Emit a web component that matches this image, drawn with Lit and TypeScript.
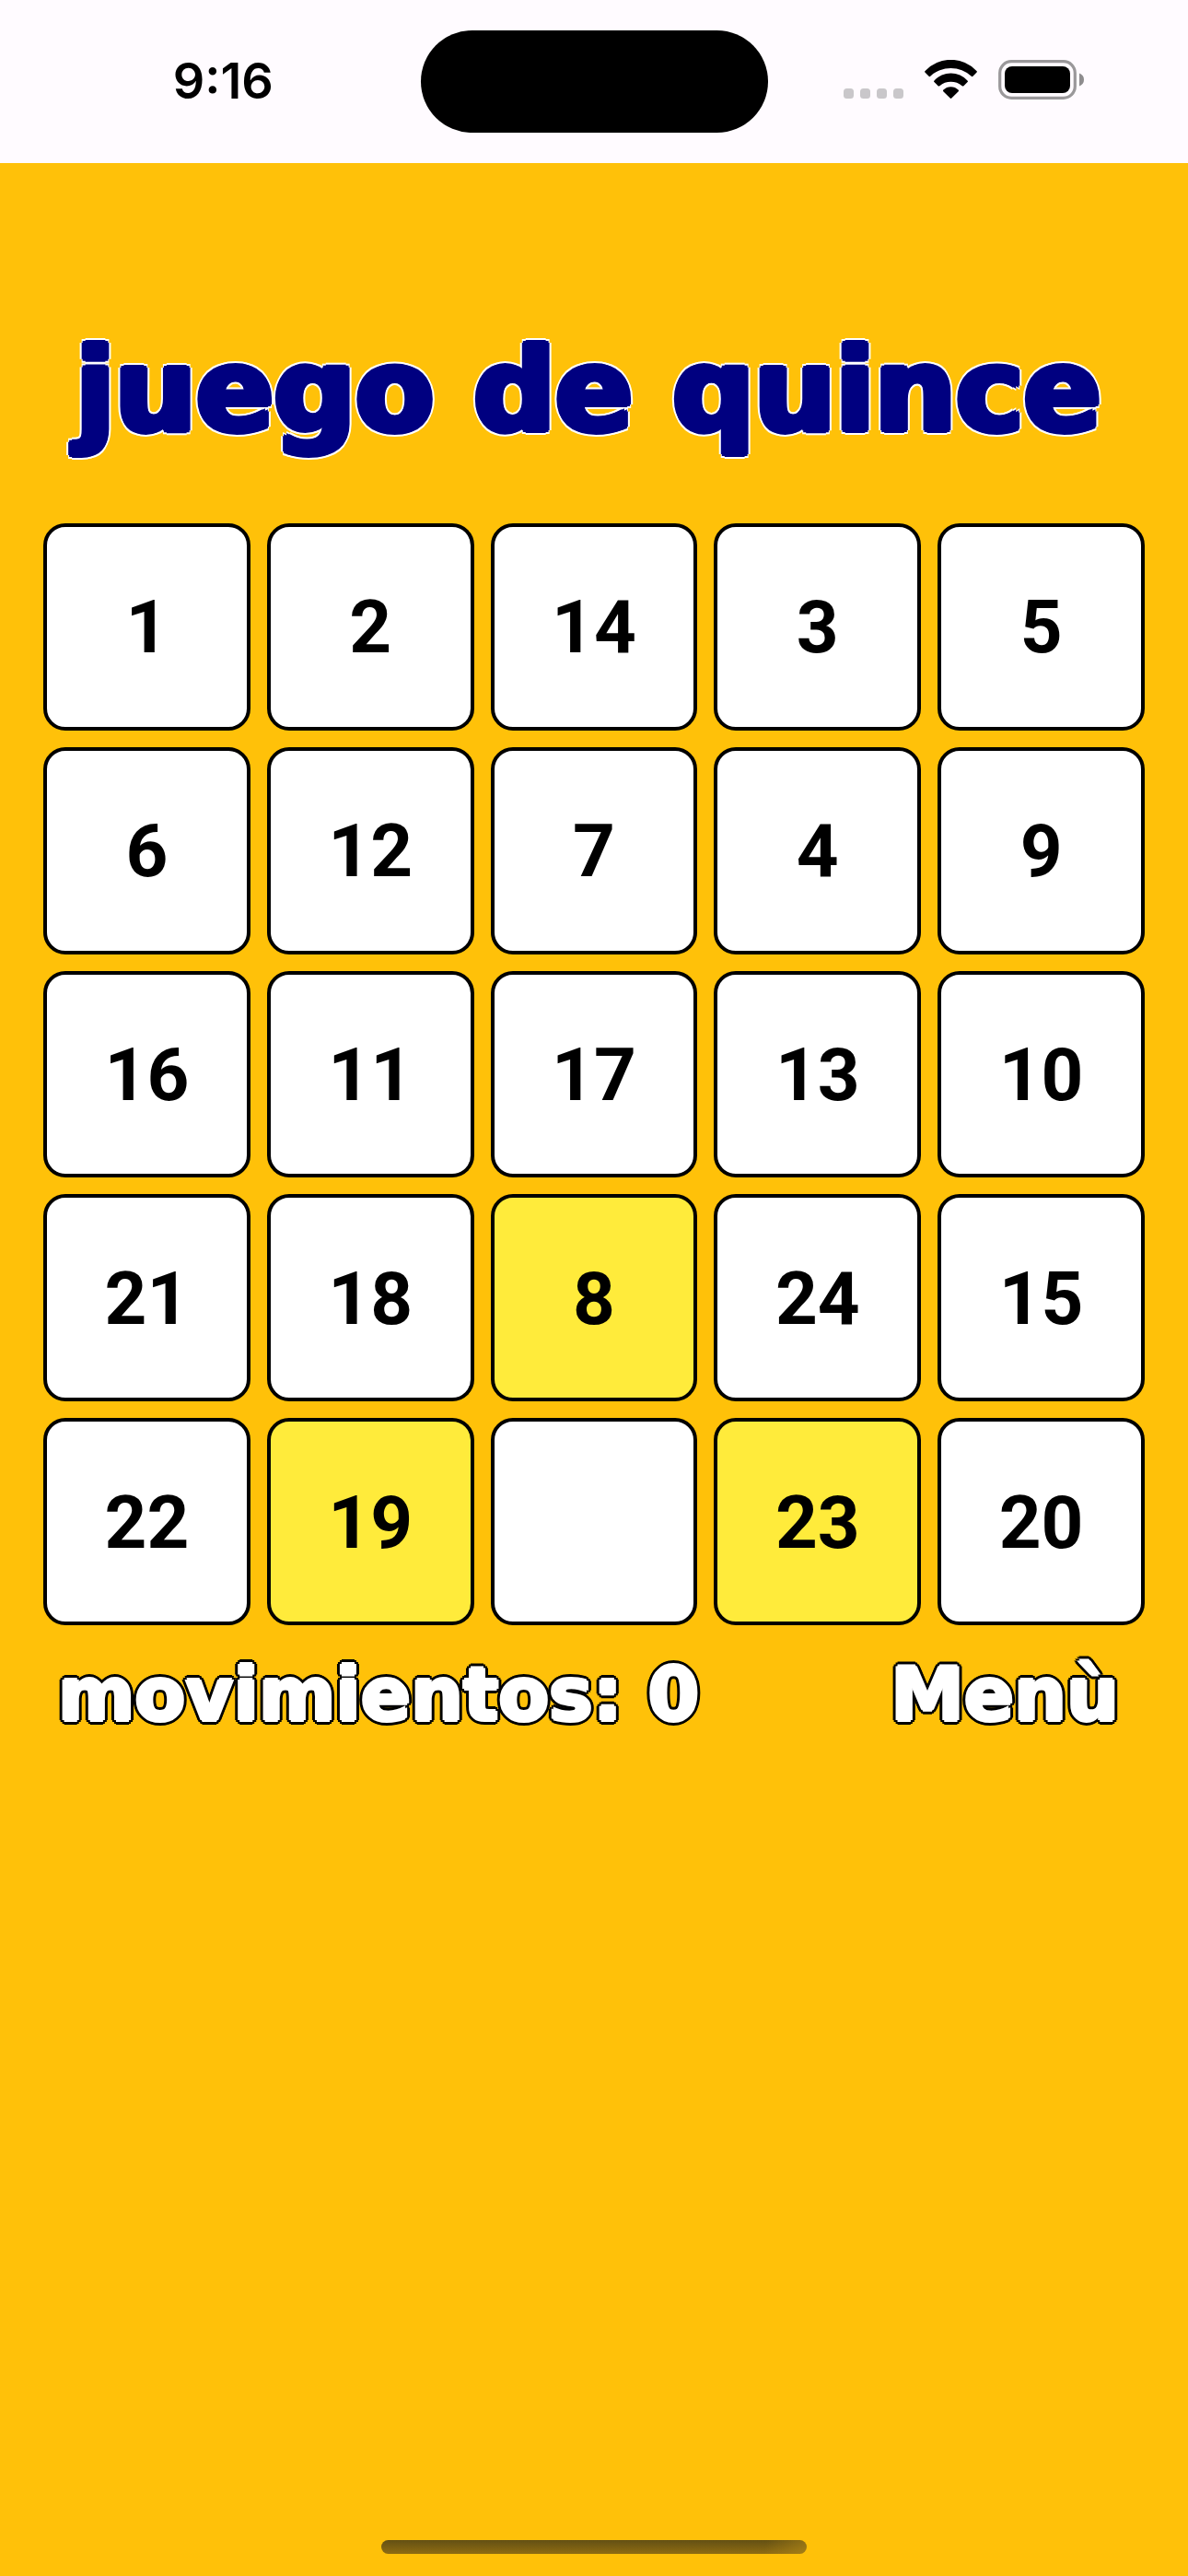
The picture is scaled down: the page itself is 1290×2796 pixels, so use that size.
import { LitElement, html, css, svg } from "lit";
import { customElement, state } from "lit/decorators.js";
import { classMap } from "lit/directives/class-map.js";

const SIZE = 5;

const START: number[] = [
  1, 2, 14, 3, 5,
  6, 12, 7, 4, 9,
  16, 11, 17, 13, 10,
  21, 18, 8, 24, 15,
  22, 19, 0, 23, 20,
];

@customElement("status-bar")
class StatusBar extends LitElement {
  static styles = css`
    :host {
      display: grid;
      grid-template-columns: 1fr 377px 1fr;
      align-items: center;
      height: 177px;
      background: #fffbff;
      color: #000;
    }
    .time {
      justify-self: center;
      padding-right: 2px;
      padding-left: 30px;
      padding-bottom: 2px;
      font: 600 54px/64px Inter, "Liberation Sans", sans-serif;
    }
    .island {
      height: 111px;
      border-radius: 56px;
      background: #000;
    }
    .icons {
      justify-self: center;
      display: flex;
      padding-right: 30px;
      padding-bottom: 4px;
    }
  `;

  render() {
    return html`
      <time class="time">9:16</time>
      <div class="island"></div>
      <div class="icons">
        <svg width="261" height="43" viewBox="0 0 261 43" aria-hidden="true">
          ${[0, 18, 36, 54].map(
            (x) => svg`<rect x=${x} y="31" width="11" height="11" rx="3.5" fill="#c9c7ca" />`,
          )}
          <g transform="translate(88 0)">
            <path d="M0.6 11.9A38.3 38.3 0 0 1 56.4 11.9Q57.4 12.7 56.6 13.5L52.4 17.8Q51.7 18.5 50.8 17.7A32.8 32.8 0 0 0 6.2 17.7Q5.3 18.5 4.6 17.8L0.4 13.5Q-0.4 12.7 0.6 11.9Z" />
            <path d="M10.5 22.4A24.2 24.2 0 0 1 46.5 22.4Q47.4 23.2 46.6 24L42.4 28.2Q41.6 29 40.7 28.2A18.8 18.8 0 0 0 16.3 28.2Q15.4 29 14.6 28.2L10.4 24Q9.6 23.2 10.5 22.4Z" />
            <path d="M20.4 32.6A11.5 11.5 0 0 1 36.6 32.6Q37.5 33.4 36.7 34.2L29.3 41.5Q28.5 42.3 27.7 41.5L20.3 34.2Q19.5 33.4 20.4 32.6Z" />
          </g>
          <rect x="169.7" y="1.7" width="81.6" height="39.6" rx="12.5" fill="none" stroke="#9a989a" stroke-width="3.2" />
          <rect x="175" y="7" width="71" height="29" rx="8" />
          <path d="M256 14.6Q261 16.5 261 21.5Q261 26.5 256 28.4Z" fill="#8e8c8e" />
        </svg>
      </div>
    `;
  }
}

@customElement("app-root")
class AppRoot extends LitElement {
  static styles = css`
    :host {
      display: flex;
      flex-direction: column;
      min-height: 100vh;
      background: #ffc109;
    }
    main {
      display: flex;
      flex-direction: column;
      padding: 172px 47px 0;
    }
    .title,
    .score {
      font-family: "DejaVu Sans", sans-serif;
      font-weight: 700;
      white-space: nowrap;
    }
    .title {
      margin: 0 0 69px;
      padding-right: 12px;
      text-align: center;
      font-size: 124px;
      line-height: 150px;
      color: #000080;
      text-shadow:
        4px 0 #000080, -4px 0 #000080, 0 3px #000080, 0 -3px #000080,
        3px 2px #000080, -3px 2px #000080, 3px -2px #000080, -3px -2px #000080,
        6px 0 #fff, -6px 0 #fff, 0 5px #fff, 0 -5px #fff,
        4px 4px #fff, -4px 4px #fff, 4px -4px #fff, -4px -4px #fff;
    }
    .board {
      display: grid;
      grid-template-columns: repeat(5, 1fr);
      gap: 18px;
    }
    .tile {
      box-sizing: border-box;
      aspect-ratio: 1;
      min-width: 0;
      padding: 2px 0 0;
      border: 4px solid #000;
      border-radius: 24px;
      background: #fff;
      color: #000;
      font: 700 80px/96px Roboto, "Liberation Sans", sans-serif;
    }
    .movable {
      background: #ffeb3b;
    }
    .score {
      display: flex;
      justify-content: space-between;
      padding: 24px 28px 0 16px;
      font-size: 80px;
      line-height: 104px;
      color: #fff;
      text-shadow:
        2px 0 #fff, -2px 0 #fff, 0 2px #fff, 0 -2px #fff,
        5px 0 #000, -5px 0 #000, 0 5px #000, 0 -5px #000,
        4px 2px #000, -4px 2px #000, 4px -2px #000, -4px -2px #000,
        2px 4px #000, -2px 4px #000, 2px -4px #000, -2px -4px #000;
    }
    .menu {
      padding: 0;
      border: 0;
      background: none;
      color: inherit;
      font: inherit;
      text-shadow: inherit;
    }
    .home {
      align-self: center;
      width: 462px;
      height: 15px;
      margin-top: auto;
      margin-bottom: 24px;
      border-radius: 8px;
      background:
        linear-gradient(100deg, transparent 90%, rgba(190, 145, 25, 0.5)),
        linear-gradient(#635014, #8f6c12);
    }
  `;

  @state() private tiles = START;
  @state() private moves = 0;

  private canMove(index: number) {
    const hole = this.tiles.indexOf(0);
    const rows = Math.abs(Math.floor(index / SIZE) - Math.floor(hole / SIZE));
    const columns = Math.abs((index % SIZE) - (hole % SIZE));
    return rows + columns === 1;
  }

  private move(index: number) {
    if (!this.canMove(index)) return;
    const next = [...this.tiles];
    next[next.indexOf(0)] = next[index];
    next[index] = 0;
    this.tiles = next;
    this.moves += 1;
  }

  private restart() {
    this.tiles = START;
    this.moves = 0;
  }

  render() {
    return html`
      <status-bar></status-bar>
      <main>
        <h1 class="title">juego de quince</h1>
        <div class="board">
          ${this.tiles.map(
            (value, index) => html`<button
              class=${classMap({ tile: true, movable: this.canMove(index) })}
              aria-label=${value ? String(value) : "vacío"}
              @click=${() => this.move(index)}
            >${value || ""}</button>`,
          )}
        </div>
        <div class="score">
          <span>movimientos: ${this.moves}</span>
          <button class="menu" @click=${this.restart}>Menù</button>
        </div>
      </main>
      <div class="home"></div>
    `;
  }
}
